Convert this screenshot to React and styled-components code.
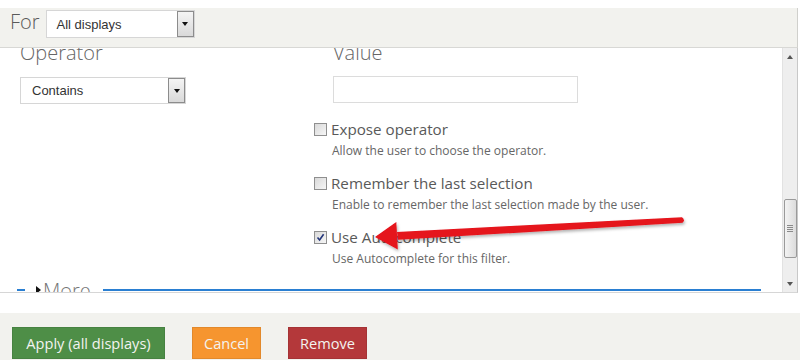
import React from "react";
import styled, { createGlobalStyle } from "styled-components";

const GlobalStyle = createGlobalStyle`
  html, body {
    margin: 0;
    padding: 0;
    background: #ffffff;
  }
  body {
    font-family: "Open Sans", "Liberation Sans", sans-serif;
  }
`;

const Page = styled.div`
  position: relative;
  width: 800px;
  height: 360px;
  overflow: hidden;
  display: flex;
  flex-direction: column;
  padding-top: 8px;
  box-sizing: border-box;
`;

const ForBar = styled.div`
  width: 798px;
  height: 40px;
  flex: none;
  box-sizing: border-box;
  display: flex;
  align-items: flex-start;
  gap: 6px;
  padding-left: 10px;
  background: #f2f2ee;
  border-bottom: 1px solid #d8d8d5;
  border-right: 1px solid #d0d0cc;
`;

const BarLabel = styled.span`
  font-size: 20px;
  line-height: 28px;
  color: #5a5a5a;
  font-weight: 300;
`;

const SelectBox = styled.div`
  width: ${(p) => p.width}px;
  height: ${(p) => p.height}px;
  margin-top: ${(p) => p.top || 0}px;
  box-sizing: border-box;
  display: flex;
  align-items: center;
  background: #fff;
  border: 1px solid #d6d6d6;
  font-family: "Liberation Sans", Arial, sans-serif;
  font-size: 13px;
  color: #333;
`;

const SelectText = styled.span`
  flex: 1;
  padding-left: ${(p) => p.pad}px;
`;

const SelectArrow = styled.span`
  width: 17px;
  align-self: stretch;
  box-sizing: border-box;
  border: 1px solid #8c8c8c;
  background: linear-gradient(to bottom, #f4f4f4, #d9d9d9);
  display: flex;
  align-items: center;
  justify-content: center;
  &::after {
    content: "";
    border-left: 3.5px solid transparent;
    border-right: 3.5px solid transparent;
    border-top: 4px solid #111;
  }
`;

const Main = styled.div`
  width: 798px;
  height: 245px;
  flex: none;
  display: flex;
  border-bottom: 1px solid #d6d6d6;
  border-right: 1px solid #c8c8c8;
  box-sizing: border-box;
`;

const Viewport = styled.div`
  flex: 1;
  overflow: hidden;
`;

const Scrolled = styled.div`
  margin-top: -8px;
`;

const Columns = styled.div`
  display: grid;
  grid-template-columns: 295px 1fr;
  padding-left: 20px;
`;

const Column = styled.div`
  display: flex;
  flex-direction: column;
`;

const FieldLabel = styled.div`
  font-size: 20px;
  line-height: 26px;
  height: 26px;
  color: #666;
  font-weight: 300;
  padding-left: ${(p) => p.indent || 0}px;
`;

const TextInput = styled.div`
  width: 245px;
  height: 27px;
  margin-top: 10px;
  margin-left: 18px;
  box-sizing: border-box;
  border: 1px solid #dcdcdc;
  background: #fff;
`;

const CheckList = styled.div`
  margin-top: 16px;
  margin-bottom: -3px;
  display: flex;
  flex-direction: column;
`;

const CheckItem = styled.div`
  margin-bottom: 13px;
`;

const CheckRow = styled.div`
  display: flex;
  align-items: center;
  gap: 4px;
  height: 20px;
`;

const Box = styled.span`
  width: 13px;
  height: 13px;
  margin-left: -1px;
  box-sizing: border-box;
  border: 1px solid #8f8f8f;
  background: linear-gradient(135deg, #d9d9d9, #f6f6f6);
  display: flex;
  align-items: center;
  justify-content: center;
`;

const CheckLabel = styled.span`
  font-size: 15.2px;
  line-height: 20px;
  color: #595959;
`;

const Description = styled.div`
  margin-top: 3px;
  padding-left: 17px;
  font-size: 12px;
  line-height: 18px;
  color: #666;
`;

const MoreRow = styled.div`
  display: flex;
  height: 26px;
  padding: 0 21px 0 17px;
`;

const BlueLine = styled.span`
  height: 2px;
  margin-top: 11px;
  width: ${(p) => (p.short ? "8px" : "auto")};
  flex: ${(p) => (p.short ? "none" : "1")};
  background: #2a7fd2;
`;

const Legend = styled.span`
  width: 78px;
  padding-left: 11px;
  box-sizing: border-box;
  display: flex;
  align-items: flex-start;
  gap: 2px;
  font-size: 20px;
  line-height: 26px;
  color: #777;
  font-weight: 300;
`;

const Tri = styled.span`
  margin-top: 8px;
  width: 0;
  height: 0;
  border-top: 4px solid transparent;
  border-bottom: 4px solid transparent;
  border-left: 5px solid #111;
`;

const Scrollbar = styled.div`
  width: 15px;
  display: flex;
  flex-direction: column;
  align-items: center;
  background: #eeeeee;
  border-left: 1px solid #e2e2e2;
  box-sizing: border-box;
`;

const ScrollArrow = styled.span`
  height: 17px;
  display: flex;
  align-items: center;
  justify-content: center;
  &::after {
    content: "";
    border-left: 3.5px solid transparent;
    border-right: 3.5px solid transparent;
    ${(p) =>
      p.up ? "border-bottom: 4px solid #555;" : "border-top: 4px solid #555;"}
  }
`;

const Track = styled.div`
  flex: 1;
  width: 100%;
  display: flex;
  flex-direction: column;
  justify-content: flex-end;
  align-items: center;
  padding-bottom: 17px;
`;

const Thumb = styled.div`
  width: 13px;
  height: 59px;
  box-sizing: border-box;
  border: 1px solid #9a9a9a;
  border-radius: 2px;
  background: linear-gradient(to right, #f3f3f3, #dcdcdc);
  display: flex;
  flex-direction: column;
  align-items: center;
  justify-content: center;
  gap: 1px;
`;

const Grip = styled.span`
  width: 6px;
  height: 1px;
  background: #8a8a8a;
`;

const Gap = styled.div`
  height: 20px;
  flex: none;
`;

const Footer = styled.div`
  flex: 1;
  background: #f2f2ee;
  display: flex;
  align-items: flex-start;
  gap: 27px;
  padding: 14px 0 0 12px;
`;

const Button = styled.span`
  width: ${(p) => p.width}px;
  height: 32px;
  display: flex;
  align-items: center;
  justify-content: center;
  background: ${(p) => p.bg};
  color: #f3f3f0;
  font-size: 14.6px;
  border: 1px solid rgba(0, 0, 0, 0.08);
  box-sizing: border-box;
`;

const ArrowLayer = styled.svg`
  position: absolute;
  left: 0;
  top: 0;
  pointer-events: none;
`;

const Check = ({ checked, label, desc }) => (
  <CheckItem>
    <CheckRow>
      <Box>
        {checked && (
          <svg width="9" height="9" viewBox="0 0 9 9">
            <path d="M1.5 4.5 L3.6 7 L7.6 1.2" fill="none" stroke="#23357a" strokeWidth="1.6" />
          </svg>
        )}
      </Box>
      <CheckLabel>{label}</CheckLabel>
    </CheckRow>
    <Description>{desc}</Description>
  </CheckItem>
);

export default function App() {
  return (
    <>
      <GlobalStyle />
      <Page>
        <ForBar>
          <BarLabel>For</BarLabel>
          <SelectBox width={149} height={28} top={2}>
            <SelectText pad={10}>All displays</SelectText>
            <SelectArrow />
          </SelectBox>
        </ForBar>
        <Main>
          <Viewport>
            <Scrolled>
              <Columns>
                <Column>
                  <FieldLabel>Operator</FieldLabel>
                  <SelectBox width={166} height={27} top={11}>
                    <SelectText pad={11}>Contains</SelectText>
                    <SelectArrow />
                  </SelectBox>
                </Column>
                <Column>
                  <FieldLabel indent={18}>Value</FieldLabel>
                  <TextInput />
                  <CheckList>
                    <Check label="Expose operator" desc="Allow the user to choose the operator." />
                    <Check
                      label="Remember the last selection"
                      desc="Enable to remember the last selection made by the user."
                    />
                    <Check checked label="Use Autocomplete" desc="Use Autocomplete for this filter." />
                  </CheckList>
                </Column>
              </Columns>
              <MoreRow>
                <BlueLine short />
                <Legend>
                  <Tri />
                  More
                </Legend>
                <BlueLine />
              </MoreRow>
            </Scrolled>
          </Viewport>
          <Scrollbar>
            <ScrollArrow up />
            <Track>
              <Thumb>
                <Grip />
                <Grip />
                <Grip />
                <Grip />
              </Thumb>
            </Track>
            <ScrollArrow />
          </Scrollbar>
        </Main>
        <Gap />
        <Footer>
          <Button bg="#4e8e47" width={153}>Apply (all displays)</Button>
          <Button bg="#f6952f" width={69}>Cancel</Button>
          <Button bg="#b4383a" width={79}>Remove</Button>
        </Footer>
        <ArrowLayer width="800" height="360" viewBox="0 0 800 360">
          <defs>
            <filter id="shade" x="-10%" y="-50%" width="120%" height="200%">
              <feDropShadow dx="1" dy="2" stdDeviation="1.5" floodColor="#000" floodOpacity="0.3" />
            </filter>
          </defs>
          <g filter="url(#shade)" fill="#e5121a">
            <path d="M397 232 L682 217.2 Q685.5 219.8 682.6 222.8 L398 239.8 Z" />
            <path d="M375 237 L396.3 222 L397.8 249.5 Z" />
          </g>
        </ArrowLayer>
      </Page>
    </>
  );
}
